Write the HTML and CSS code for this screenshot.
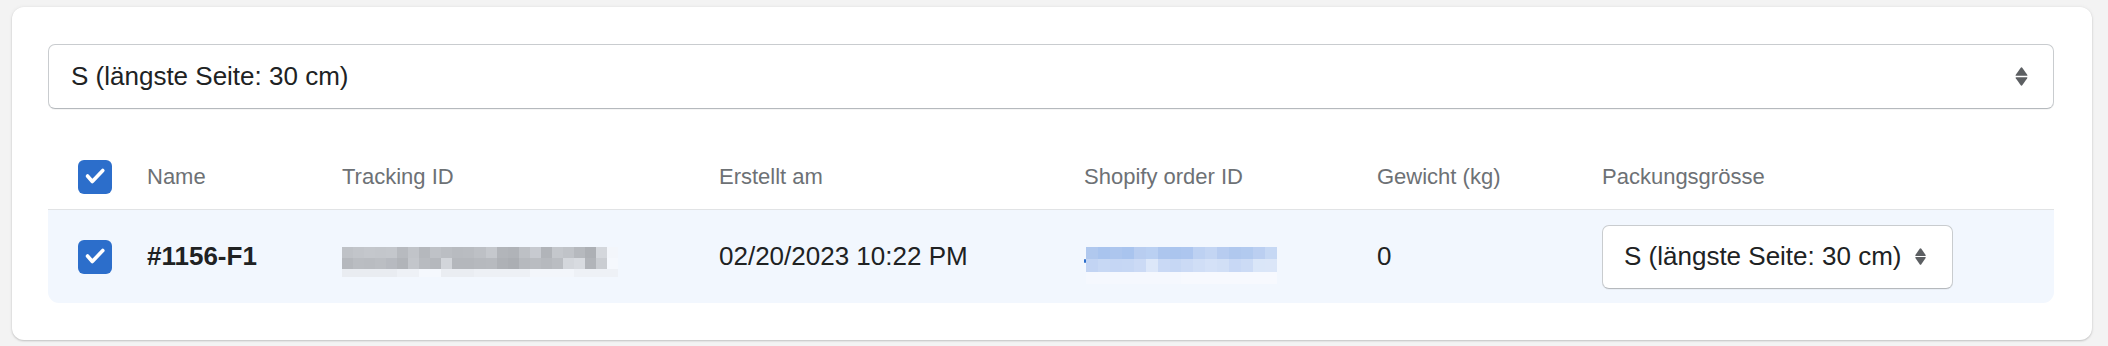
FILE: index.html
```html
<!DOCTYPE html>
<html lang="de">
<head>
<meta charset="utf-8">
<title>Pakete</title>
<link rel="stylesheet" href="styles.css">
</head>
<body>
<div class="page">
  <div class="card">
    <div class="select select-big">
      <span class="select-value">S (längste Seite: 30 cm)</span>
      <svg class="arrows arrows-big" viewBox="0 0 12 18" aria-hidden="true">
        <path d="M0.6 7.4 L5.1 0.9 Q6 -0.3 6.9 0.9 L11.4 7.4 Q12 8.4 10.9 8.4 H1.1 Q0 8.4 0.6 7.4 Z"/>
        <path d="M0.6 10.6 L5.1 17.1 Q6 18.3 6.9 17.1 L11.4 10.6 Q12 9.6 10.9 9.6 H1.1 Q0 9.6 0.6 10.6 Z"/>
      </svg>
    </div>

    <div class="table">
      <div class="row row-head">
        <div class="cell"><span class="checkbox"><svg viewBox="0 0 34 34"><path d="M9.5 16 L14.3 21.5 L24.8 10.5"/></svg></span></div>
        <div class="cell">Name</div>
        <div class="cell">Tracking ID</div>
        <div class="cell">Erstellt am</div>
        <div class="cell">Shopify order ID</div>
        <div class="cell">Gewicht (kg)</div>
        <div class="cell">Packungsgrösse</div>
      </div>
      <div class="row row-body">
        <div class="cell"><span class="checkbox"><svg viewBox="0 0 34 34"><path d="M9.5 16 L14.3 21.5 L24.8 10.5"/></svg></span></div>
        <div class="cell name">#1156-F1</div>
        <div class="cell"><span class="blur blur-tracking"></span></div>
        <div class="cell">02/20/2023 10:22 PM</div>
        <div class="cell"><span class="link-dot"></span><span class="blur blur-order"></span></div>
        <div class="cell">0</div>
        <div class="cell">
          <div class="select select-small">
            <span class="select-value">S (längste Seite: 30 cm)</span>
            <svg class="arrows arrows-small" viewBox="0 0 12 18" aria-hidden="true">
              <path d="M0.6 7.4 L5.1 0.9 Q6 -0.3 6.9 0.9 L11.4 7.4 Q12 8.4 10.9 8.4 H1.1 Q0 8.4 0.6 7.4 Z"/>
              <path d="M0.6 10.6 L5.1 17.1 Q6 18.3 6.9 17.1 L11.4 10.6 Q12 9.6 10.9 9.6 H1.1 Q0 9.6 0.6 10.6 Z"/>
            </svg>
          </div>
        </div>
      </div>
    </div>
  </div>
</div>
</body>
</html>
```

FILE: styles.css
```css
html, body {
  margin: 0;
  padding: 0;
}

body {
  background: #f3f3f3;
  font-family: "Liberation Sans", Arial, sans-serif;
  color: #202223;
}

.page {
  padding: 7px 16px 5px 12px;
}

.card {
  background: #ffffff;
  border-radius: 12px;
  box-shadow: 0 0 4px rgba(23, 24, 24, 0.06), 0 1px 2px rgba(0, 0, 0, 0.18);
  padding: 37px 38px 37px 36px;
}

.select {
  box-sizing: border-box;
  display: flex;
  align-items: center;
  justify-content: space-between;
  background: #ffffff;
  border: 1px solid #c9cccf;
  border-bottom-color: #b5b9bd;
  border-radius: 7px;
  font-size: 26px;
  color: #202223;
  box-shadow: 0 1px 0 rgba(0, 0, 0, 0.04);
}

.select-big {
  height: 65px;
  padding: 0 25px 0 22px;
}

.select-small {
  width: 351px;
  height: 64px;
  padding: 0 25px 0 21px;
}

.arrows {
  fill: #5c5f62;
  flex: none;
}

.arrows-big {
  width: 13px;
  height: 19px;
}

.arrows-small {
  width: 13px;
  height: 17px;
}

.table {
  margin-top: 36px;
}

.row {
  display: grid;
  grid-template-columns: 69px 195px 377px 365px 293px 225px 1fr;
  align-items: center;
  padding-left: 30px;
}

.cell {
  display: flex;
  align-items: center;
  white-space: nowrap;
}

.row-head {
  height: 64px;
  font-size: 22px;
  color: #6d7175;
}

.row-body {
  box-sizing: border-box;
  height: 94px;
  border-top: 1px solid #e1e3e5;
  background: #f2f7fe;
  border-radius: 0 0 11px 11px;
  font-size: 26px;
  color: #202223;
}

.name {
  font-weight: 700;
}

.checkbox {
  display: block;
  width: 34px;
  height: 34px;
  border-radius: 6px;
  background: #2c6ecb;
}

.checkbox svg {
  display: block;
  width: 34px;
  height: 34px;
  fill: none;
  stroke: #ffffff;
  stroke-width: 3.6;
  stroke-linecap: round;
  stroke-linejoin: round;
}

.blur {
  display: block;
}

.blur-tracking {
  width: 276px;
  height: 30px;
  margin-top: 10px;
  background:
    linear-gradient(to right,
      #bfc2c7 0 4%, #c2c5ca 4% 8%, #c4c7cc 8% 12%, #c3c6cb 12% 16%, #c4c7cc 16% 20%,
      #b7babf 20% 24%, #c1c4c9 24% 28%, #b5b8bd 28% 32%, #bfc2c7 32% 36%, #bbbec3 36% 40%,
      #b8bbc0 40% 44%, #b9bcc1 44% 48%, #bdc0c5 48% 52%, #c5c8cd 52% 56%, #b2b5ba 56% 60%,
      #b0b3b8 60% 64%, #bdc0c5 64% 68%, #c7cad0 68% 72%, #b1b4b9 72% 76%, #c4c7cc 76% 80%,
      #c0c3c8 80% 84%, #b6b9be 84% 88%, #adb0b5 88% 92%, #d4d7dc 92% 96%, #f3f6fb 96% 100%)
      0 0 / 100% 11px no-repeat,
    linear-gradient(to right,
      #b5b8bd 0 4%, #babdc2 4% 8%, #b9bcc1 8% 12%, #bbbec3 12% 16%, #b7bac0 16% 20%,
      #b1b4b9 20% 24%, #c3c6cb 24% 28%, #b8bbc0 28% 32%, #b5b8bd 32% 36%, #d2d5da 36% 40%,
      #b4b7bc 40% 44%, #b4b7bc 44% 48%, #b6b9be 48% 52%, #b7babf 52% 56%, #aeb1b6 56% 60%,
      #abaeb3 60% 64%, #b6b9be 64% 68%, #b9bcc1 68% 72%, #b6b9be 72% 76%, #babdc2 76% 80%,
      #d4d7dc 80% 84%, #d8dbe0 84% 88%, #b1b4b9 88% 92%, #cacdd2 92% 96%, #f5f8fd 96% 100%)
      0 11px / 100% 11px no-repeat,
    linear-gradient(to right,
      #e9ecf1 0 20%, #eef1f6 20% 28%, #f5f8fd 28% 36%, #eaedf2 36% 48%, #edf0f5 48% 68%,
      #f3f6fb 68% 84%, #eef1f6 84% 100%)
      0 22px / 100% 8px no-repeat;
}

.link-dot {
  display: block;
  width: 2px;
  height: 4px;
  margin: 8px 0 0 0;
  background: #2c6ecb;
  border-radius: 1px;
}

.blur-order {
  width: 191px;
  height: 37px;
  margin-top: 17px;
  background:
    linear-gradient(to right,
      #b0c8ee 0 6.25%, #a9c4ee 6.25% 12.5%, #adc6ee 12.5% 18.75%, #a9c4ee 18.75% 25%,
      #b8cdf0 25% 31.25%, #bad0f2 31.25% 37.5%, #adc6ee 37.5% 43.75%, #abc5ee 43.75% 50%,
      #adc6ef 50% 56.25%, #bdd1f2 56.25% 62.5%, #c3d5f3 62.5% 68.75%, #b7ccf0 68.75% 75%,
      #b0c8ee 75% 81.25%, #b2caef 81.25% 87.5%, #bbcff1 87.5% 93.75%, #c6d8f4 93.75% 100%)
      0 0 / 100% 12px no-repeat,
    linear-gradient(to right,
      #c2d4f3 0 6.25%, #c7d8f4 6.25% 12.5%, #c5d6f4 12.5% 18.75%, #c6d7f4 18.75% 25%,
      #cbdaf5 25% 31.25%, #dce7f9 31.25% 37.5%, #c9d9f5 37.5% 43.75%, #c6d7f4 43.75% 50%,
      #cbdaf5 50% 56.25%, #d0def6 56.25% 62.5%, #d4e1f7 62.5% 68.75%, #d1dff6 68.75% 75%,
      #c8d8f5 75% 81.25%, #ccdbf5 81.25% 87.5%, #dae6f8 87.5% 93.75%, #dbe6f8 93.75% 100%)
      0 12px / 100% 13px no-repeat,
    linear-gradient(to right, #f5f8fe 0 50%, #f7f9fe 50% 100%)
      0 25px / 100% 12px no-repeat;
}
```
